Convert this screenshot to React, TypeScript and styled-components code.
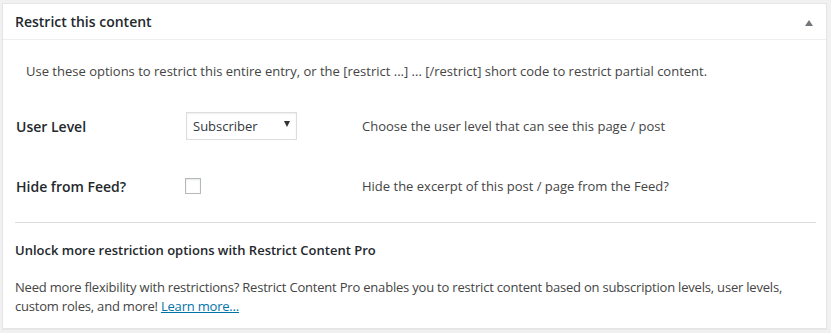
import * as React from "react";
import styled, { createGlobalStyle } from "styled-components";

// ================================================================================
//  Global page styles
// ================================================================================

const GlobalStyle = createGlobalStyle`
  html, body {
    margin: 0;
    padding: 0;
    background: #f1f1f1;
  }
  body {
    font-family: "Open Sans", "Noto Sans", "Liberation Sans", sans-serif;
    font-size: 13px;
    color: #444;
  }
`;

// ================================================================================
//  The styled components
// ================================================================================

const Page = styled.div`
  padding: 3px 4px 6px 2px;
`;

/** The metabox wrapper */
const Postbox = styled.div`
  background: #fff;
  border: 1px solid #e5e5e5;
  box-shadow: 0 1px 1px rgba(0, 0, 0, 0.04);
`;

const Header = styled.div`
  display: flex;
  align-items: center;
  justify-content: space-between;
  height: 35px;
  padding: 0 12px 0 12px;
  border-bottom: 1px solid #eee;
`;

const Title = styled.h2`
  margin: 0;
  font-size: 14px;
  font-weight: 600;
  color: #23282d;
`;

const Toggle = styled.span`
  width: 0;
  height: 0;
  border-left: 4px solid transparent;
  border-right: 4px solid transparent;
  border-bottom: 6px solid #72777c;
  margin: 3px 1px 0 0;
`;

const Inside = styled.div`
  padding: 0 10px 12px 12px;
`;

const Intro = styled.p`
  margin: 21px 0 0 0;
  padding-left: 11px;
  line-height: 20px;
`;

const FieldTable = styled.div`
  display: grid;
  grid-template-columns: 170px 176px 1fr;
  grid-auto-rows: 60px;
  align-items: center;
  margin-top: 15px;
  padding-left: 1px;
`;

const Label = styled.label`
  font-size: 14px;
  font-weight: 600;
  color: #23282d;
`;

const Select = styled.div`
  display: flex;
  align-items: center;
  justify-content: space-between;
  width: 111px;
  height: 28px;
  box-sizing: border-box;
  padding: 0 6px 0 6px;
  border: 1px solid #ddd;
  box-shadow: inset 0 1px 2px rgba(0, 0, 0, 0.07);
  color: #32373c;
  font-size: 13px;
`;

const Caret = styled.span`
  width: 0;
  height: 0;
  border-left: 3px solid transparent;
  border-right: 3px solid transparent;
  border-top: 6px solid #333;
  margin-top: -4px;
`;

const Checkbox = styled.span`
  display: block;
  width: 16px;
  height: 16px;
  box-sizing: border-box;
  border: 1px solid #b4b9be;
  box-shadow: inset 0 1px 2px rgba(0, 0, 0, 0.1);
  background: #fff;
  margin-left: -1px;
`;

const Description = styled.span`
  color: #444;
`;

const Divider = styled.hr`
  margin: 6px 0 0 0;
  border: 0;
  border-top: 1px solid #ddd;
`;

const ProHeading = styled.h4`
  margin: 18px 0 0 0;
  font-size: 13px;
  font-weight: 600;
  color: #23282d;
  line-height: 18px;
`;

const ProText = styled.p`
  margin: 19px 0 0 0;
  line-height: 19px;
  letter-spacing: -0.2px;
`;

const Link = styled.a`
  color: #0073aa;
  text-decoration: underline;
`;

// ================================================================================
//  The main component
// ================================================================================

export default function App() {
  return (
    <>
      <GlobalStyle />
      <Page>
        <Postbox>
          <Header>
            <Title>Restrict this content</Title>
            <Toggle />
          </Header>
          <Inside>
            <Intro>
              Use these options to restrict this entire entry, or the [restrict
              ...] ... [/restrict] short code to restrict partial content.
            </Intro>
            <FieldTable>
              <Label>User Level</Label>
              <Select>
                Subscriber
                <Caret />
              </Select>
              <Description>
                Choose the user level that can see this page / post
              </Description>

              <Label>Hide from Feed?</Label>
              <div>
                <Checkbox />
              </div>
              <Description>
                Hide the excerpt of this post / page from the Feed?
              </Description>
            </FieldTable>
            <Divider />
            <ProHeading>
              Unlock more restriction options with Restrict Content Pro
            </ProHeading>
            <ProText>
              Need more flexibility with restrictions? Restrict Content Pro
              enables you to restrict content based on subscription levels, user
              levels, custom roles, and more! <Link href="#">Learn more...</Link>
            </ProText>
          </Inside>
        </Postbox>
      </Page>
    </>
  );
}
